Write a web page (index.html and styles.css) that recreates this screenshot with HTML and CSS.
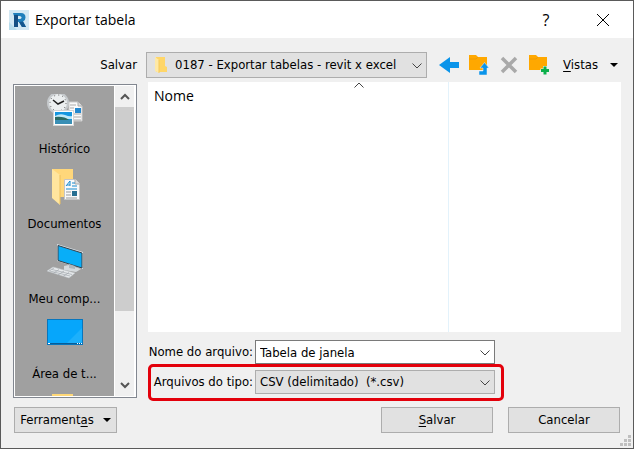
FILE: index.html
```
<!DOCTYPE html>
<html lang="pt-BR">
<head>
  <meta charset="UTF-8">
  <meta name="viewport" content="width=device-width, initial-scale=1.0">
  <title>Exportar tabela</title>
  <link rel="stylesheet" href="styles.css">
</head>
<body>
  <form class="dialog">
    <header class="titlebar">
      <svg class="logo" width="20" height="20" viewBox="0 0 20 20">
        <rect width="20" height="20" fill="#d3e8f3"/>
        <path d="M0 12L8 20H0z" fill="#b7dcec"/>
        <path d="M4 3h8q4.500 0 4.500 4.500 0 3-2.500 4l3 5.500h-4l-3-5H9v5H5V6z" fill="#1f7fbb"/>
        <path d="M5 5h4v12H5z" fill="#164f83"/>
        <path d="M9 6h1.500q2 0 2 1.500T10.500 9H9z" fill="#d3e8f3"/>
        <path d="M10 12l4-.5 3 5.500h-4z" fill="#15578f"/>
      </svg>
      <h1>Exportar tabela</h1>
      <button type="button" class="caption help" aria-label="Ajuda">?</button>
      <button type="button" class="caption" aria-label="Fechar">
        <svg width="12" height="12" viewBox="0 0 12 12"><path d="M0 0L12 12M12 0L0 12" stroke="#000" fill="none"/></svg>
      </button>
    </header>

    <div class="toolbar">
      <label for="folder">Salvar</label>
      <div class="combo folder">
        <svg class="combo-icon" width="12" height="17" viewBox="0 0 12 17">
          <path d="M1 1h9v9l2 1v5H1z" fill="#ffd668"/>
          <path d="M0 1l4 3v13l-4-2z" fill="#ffe9a6"/>
          <path d="M4 4v13" stroke="#f5c95a" fill="none"/>
        </svg>
        <select id="folder">
          <option>0187 - Exportar tabelas - revit x excel</option>
        </select>
        <svg class="chevron" width="10" height="6" viewBox="0 0 10 6"><path d="M.5.5L5 5 9.500.5"/></svg>
      </div>
      <div class="tools">
        <button type="button" aria-label="Voltar">
          <svg width="20" height="16" viewBox="0 0 20 16"><path d="M0 8L11 0v5h9v6h-9v5z" fill="#0a94ea"/></svg>
        </button>
        <button type="button" aria-label="Pasta acima">
          <svg width="20" height="20" viewBox="0 0 20 20">
            <path d="M0 0h7l2 2h9v13H0z" fill="#ffa800"/>
            <path d="M0 4h7l2-2" stroke="#f09a00" fill="none"/>
            <path d="M10 16h4v-3h-3l4.500-5.500 4.500 5.500h-2v7h-8z" fill="#0a94ea" stroke="#f0f0f0" stroke-width=".5"/>
          </svg>
        </button>
        <button type="button" aria-label="Excluir">
          <svg width="20" height="18" viewBox="0 0 20 18"><path d="M3 2l14 14M17 2L3 16" stroke="#a9a9a9" stroke-width="3.500" fill="none"/></svg>
        </button>
        <button type="button" aria-label="Nova pasta">
          <svg width="20" height="20" viewBox="0 0 20 20">
            <path d="M0 0h7l2 2h9v13H0z" fill="#ffa800"/>
            <path d="M0 4h7l2-2" stroke="#f09a00" fill="none"/>
            <path d="M16 11v9M11.500 15.500h9" stroke="#f0f0f0" stroke-width="4" fill="none"/>
            <path d="M16 11.500v8M12 15.500h8" stroke="#0bb04b" stroke-width="3" fill="none"/>
          </svg>
        </button>
      </div>
      <button type="button" class="views"><span><u>V</u>istas</span><i class="caret"></i></button>
    </div>

    <div class="content">
      <aside class="places">
        <nav class="places-list">
          <button type="button" class="place">
            <svg width="36" height="36" viewBox="0 2 36 36">
              <circle cx="11" cy="11" r="10" fill="#eceff0" stroke="#c5c9cc" stroke-width="2"/>
              <circle cx="11" cy="11" r="8" fill="none" stroke="#555" stroke-dasharray="1 3.190"/>
              <path d="M6 8l5 4 6-3" stroke="#222" stroke-width="1.500" fill="none"/>
              <path d="M22 10h9l4 4v15H22z" fill="#fafafa" stroke="#ccc"/>
              <path d="M31 10v4h4" fill="#ddd" stroke="#aaa"/>
              <path d="M23 13h6M23 16h4M23 19h4M23 22h11M23 25h11M23 28h11" stroke="#aaa"/>
              <rect x="28" y="16" width="6" height="5" fill="#2388cf"/>
              <rect x="6.500" y="18.500" width="20" height="15" fill="#fff" stroke="#d5d5d5"/>
              <rect x="8" y="20" width="17" height="12" fill="#1596df"/>
              <path d="M8 24q5-3 10-1t7 1v3H8z" fill="#bfe8f7"/>
              <path d="M8 25q9-1 14 3H8z" fill="#2c6a62"/>
              <path d="M8 28h17v4H8z" fill="#398fb5"/>
            </svg>
            <span>Histórico</span>
          </button>
          <button type="button" class="place">
            <svg width="36" height="36" viewBox="0 0 36 36">
              <path d="M5 0h21v28H5z" fill="#ffd77a"/>
              <path d="M5 0l8 6v30l-8-7z" fill="#ffe59e"/>
              <path d="M13 6v29" stroke="#edc05c" fill="none"/>
              <path d="M17.500 10.500h11l4 4v16h-15z" fill="#fafafa" stroke="#c5c5c5"/>
              <path d="M28 10v5h5" fill="#ddd" stroke="#aaa"/>
              <path d="M19 17l4-5v5M20 16h3M25 14h3M25 17h5M19 20h11" stroke="#168bd0" fill="none"/>
              <path d="M19 23h5M19 26h5M19 29h11" stroke="#999"/>
              <rect x="25" y="22" width="5" height="5" fill="#286f91"/>
            </svg>
            <span>Documentos</span>
          </button>
          <button type="button" class="place">
            <svg width="36" height="36" viewBox="0 0 36 36">
              <path d="M10 0l26 8v17l-26-8z" fill="#d8e0e5"/>
              <path d="M11 1.500L35 9v15l-24-7.500z" fill="#08aef8" stroke="#36414a"/>
              <path d="M17 22l5-1 12 4-5 3-12-2z" fill="#d5dadd"/>
              <path d="M22 20l6 2v3l-6-1z" fill="#b0b7bc"/>
              <path d="M0 27l6-4 22 6-6 5z" fill="#e6e9eb" stroke="#bfc4c8" stroke-width=".5"/>
              <path d="M3 27l20 5M5 25.500l20 5M7 24l-5 3M12 25.500l-6 4M17 27l-6 4M22 28.500l-6 4" stroke="#a2a8ad" stroke-width=".7"/>
            </svg>
            <span>Meu comp...</span>
          </button>
          <button type="button" class="place">
            <svg width="36" height="36" viewBox="0 0 36 36">
              <rect x=".5" y=".5" width="35" height="25" fill="#06a6fb" stroke="#0876bd"/>
              <path d="M20 24L35 9v15z" fill="#1cb0fc"/>
              <path d="M1 24.500h34" stroke="#085c96"/>
              <path d="M1 24.500h2M30 24.500h1M32 24.500h1M34 24.500h1" stroke="#fff"/>
            </svg>
            <span>Área de t...</span>
          </button>
          <button type="button" class="place" aria-label="Rede">
            <svg width="36" height="36" viewBox="0 3 36 36">
              <path d="M5 0h21v28H5z" fill="#ffd877"/>
              <path d="M5 3L26 0v3z" fill="#ffcb55"/>
            </svg>
          </button>
        </nav>
        <div class="scrollbar">
          <button type="button" aria-label="Rolar para cima"><svg width="10" height="7" viewBox="0 0 10 7"><path d="M1 6l4-4 4 4"/></svg></button>
          <div class="track"><div class="thumb"></div></div>
          <button type="button" aria-label="Rolar para baixo"><svg width="10" height="7" viewBox="0 0 10 7"><path d="M1 1l4 4 4-4"/></svg></button>
        </div>
      </aside>

      <main class="main">
        <div class="files">
          <div class="column name">
            <span>Nome</span>
            <svg class="sort" width="10" height="6" viewBox="0 0 10 6"><path d="M.5 5.500L5 1l4.500 4.500"/></svg>
          </div>
        </div>
        <div class="fields">
          <div class="field">
            <label for="filename">Nome do arquivo:</label>
            <div class="combo">
              <input id="filename" type="text" value="Tabela de janela">
              <svg class="chevron" width="10" height="6" viewBox="0 0 10 6"><path d="M.5.5L5 5 9.500.5"/></svg>
            </div>
          </div>
          <div class="field highlight">
            <label for="filetype">Arquivos do tipo:</label>
            <div class="combo">
              <select id="filetype">
                <option>CSV (delimitado)&nbsp; (*.csv)</option>
              </select>
              <svg class="chevron" width="10" height="6" viewBox="0 0 10 6"><path d="M.5.5L5 5 9.500.5"/></svg>
            </div>
          </div>
        </div>
      </main>
    </div>

    <footer class="actions">
      <button type="button" class="btn tools-btn"><span>Ferrament<u>a</u>s</span><i class="caret"></i></button>
      <button type="submit" class="btn save"><u>S</u>alvar</button>
      <button type="button" class="btn">Cancelar</button>
    </footer>
    <svg class="grip" width="11" height="11" viewBox="0 0 11 11">
      <path d="M8 0h3v3H8zM4 4h3v3H4zM8 4h3v3H8zM0 8h3v3H0zM4 8h3v3H4zM8 8h3v3H8z" fill="#bfbfbf"/>
    </svg>
  </form>
</body>
</html>
```
FILE: styles.css
```
* { box-sizing: border-box; }
body {
  margin: 0;
  font-family: "DejaVu Sans Condensed", "DejaVu Sans", sans-serif;
  font-size: 13px;
  line-height: 18px;
  color: #000;
}
button, input, select { font: inherit; color: inherit; }
button {
  display: flex;
  align-items: center;
  justify-content: center;
  padding: 0;
  border: 0;
  background: none;
}
svg { display: block; flex: none; }
u { text-underline-offset: 2px; }

.dialog {
  position: relative;
  display: flex;
  flex-direction: column;
  min-height: 100vh;
  border: 1px solid #5a5a5a;
  background: #f0f0f0;
}

/* title bar */
.titlebar {
  display: flex;
  align-items: center;
  height: 37px;
  padding: 0 8px;
  background: #fff;
}
.titlebar h1 {
  flex: 1;
  margin: 0 0 0 6px;
  font-family: "Open Sans", sans-serif;
  font-size: 14px;
  font-weight: 400;
}
.caption { width: 44px; height: 36px; }
.caption.help {
  width: 70px;
  font-family: "Open Sans", sans-serif;
  font-size: 16px;
}

/* toolbar */
.toolbar {
  display: flex;
  align-items: center;
  padding: 14px 15px 4px 12px;
}
.toolbar label {
  width: 124px;
  margin-right: 9px;
  text-align: right;
}
.combo {
  position: relative;
  flex: 1;
}
.combo select, .combo input {
  display: block;
  width: 100%;
  height: 24px;
  margin: 0;
  padding: 0 24px 0 4px;
  border: 1px solid #adadad;
  border-radius: 0;
  background: #e1e1e1;
  appearance: none;
}
.combo input {
  border-color: #7a7a7a;
  background: #fff;
}
.folder select {
  height: 26px;
  padding-left: 28px;
}
.combo-icon {
  position: absolute;
  left: 9px;
  top: 4px;
}
.chevron {
  position: absolute;
  right: 5px;
  top: 50%;
  margin-top: -2px;
  pointer-events: none;
}
.chevron path, .sort path {
  fill: none;
  stroke: #444;
}
.tools {
  display: flex;
  align-items: center;
  gap: 10px;
  margin-left: 12px;
}
.views {
  gap: 12px;
  margin-left: 14px;
}
.caret {
  border: 4px solid transparent;
  border-top-color: #000;
  border-bottom: 0;
}

/* places on the left, files on the right */
.content {
  display: flex;
  flex: 1;
  gap: 11px;
  padding: 0 12px;
}
.places {
  display: flex;
  width: 124px;
  margin: 2px 0 3px;
  padding: 1px;
  border: 1px solid #828790;
  background: #fff;
}
.places-list {
  flex: 1;
  height: 310px;
  padding-top: 8px;
  overflow: hidden;
  background: #a0a0a0;
}
.place {
  flex-direction: column;
  justify-content: flex-start;
  gap: 10px;
  width: 100%;
  height: 75px;
}
.scrollbar {
  display: flex;
  flex-direction: column;
  width: 21px;
  border: solid #fff;
  border-width: 0 1px;
  background: #f0f0f0;
}
.scrollbar button { height: 21px; }
.scrollbar path {
  fill: none;
  stroke: #555;
  stroke-width: 2;
}
.track { flex: 1; }
.thumb {
  height: 76%;
  background: #cdcdcd;
}

.main {
  display: flex;
  flex: 1;
  flex-direction: column;
}
.files {
  display: flex;
  flex: 1;
  background: #fff;
}
.column {
  position: relative;
  padding: 5px 6px;
  font-family: "Open Sans", sans-serif;
  font-size: 14px;
}
.name {
  width: 301px;
  border-right: 1px solid #e3f2fb;
}
.sort {
  position: absolute;
  top: 0;
  left: 206px;
}

.fields { padding: 8px 117px 0 0; }
.field {
  display: flex;
  align-items: center;
  gap: 2px;
  padding-right: 9px;
}
.field label {
  width: 105px;
  text-align: right;
  white-space: nowrap;
}
.highlight {
  padding: 3px 6px 4px 0;
  border: 3px solid #e3000b;
  border-radius: 5px;
}
.highlight label { width: 102px; }

/* bottom buttons */
.actions {
  display: flex;
  gap: 15px;
  padding: 6px 13px 15px;
}
.btn {
  width: 112px;
  height: 26px;
  border: 1px solid #adadad;
  background: #e1e1e1;
}
.tools-btn {
  gap: 9px;
  width: 103px;
}
.save { margin-left: auto; }
.grip {
  position: absolute;
  right: 2px;
  bottom: 2px;
}
```
